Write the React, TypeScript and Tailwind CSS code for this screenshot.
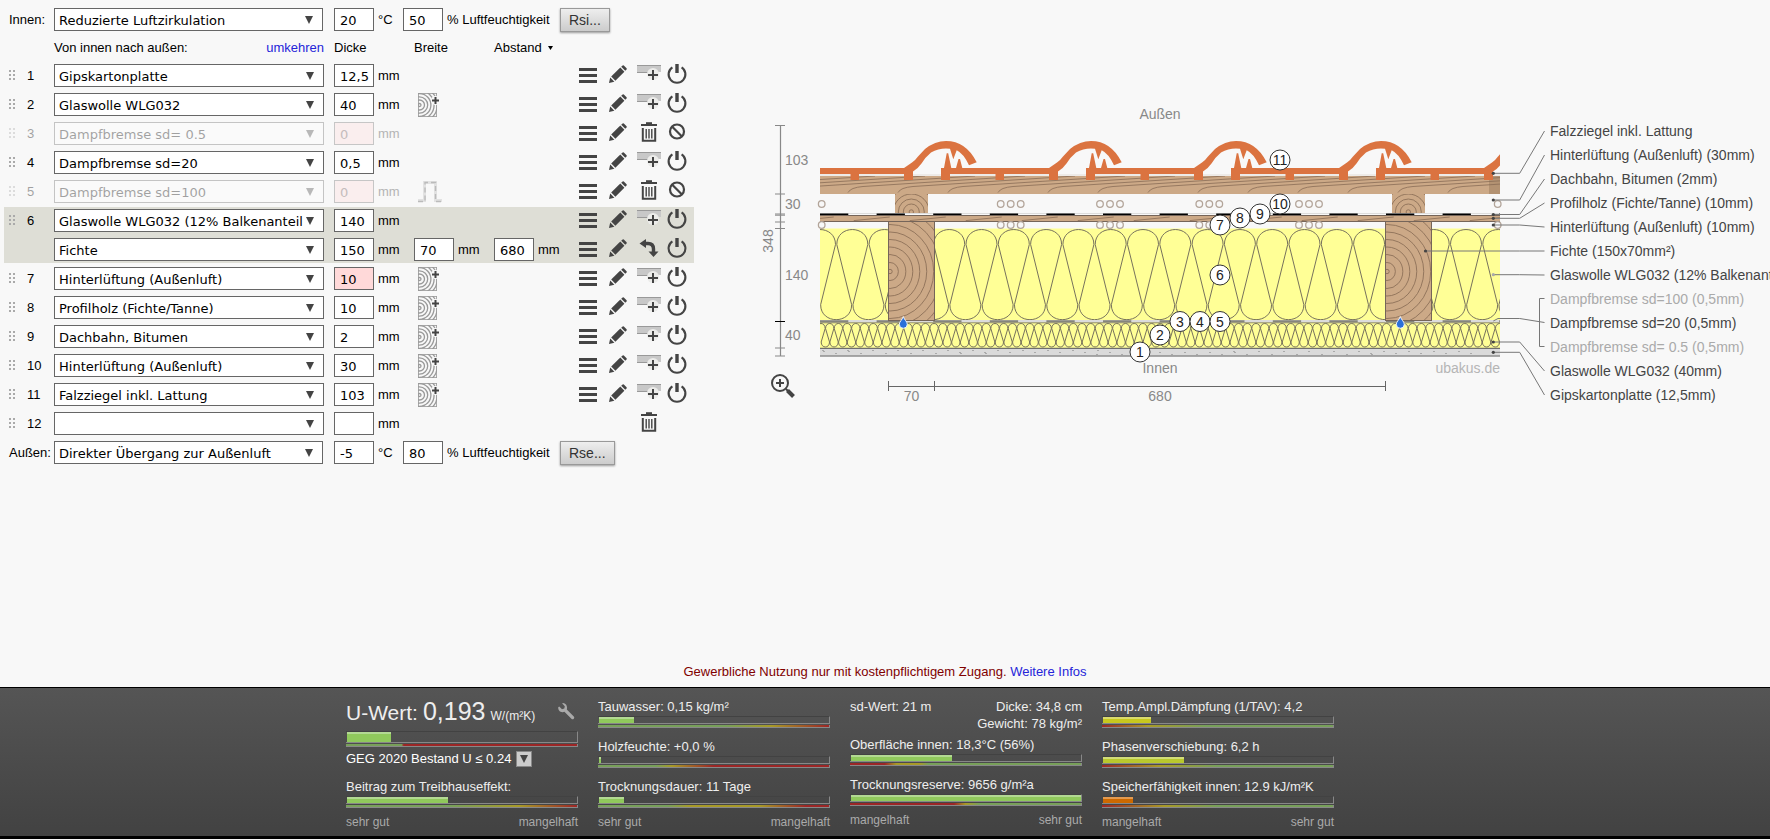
import React from "react";
import clsx from "clsx";

type Layer = {
    nr?: string;
    name: string;
    thickness: string;
    width?: string;
    spacing?: string;
    off?: boolean;
    warn?: boolean;
    extra?: "wood" | "fold";
    action?: "add" | "trash" | "swap";
    empty?: boolean;
};

const layers: Layer[] = [
    { nr: "1", name: "Gipskartonplatte", thickness: "12,5" },
    { nr: "2", name: "Glaswolle WLG032", thickness: "40", extra: "wood" },
    { nr: "3", name: "Dampfbremse sd= 0.5", thickness: "0", off: true, action: "trash" },
    { nr: "4", name: "Dampfbremse sd=20", thickness: "0,5" },
    { nr: "5", name: "Dampfbremse sd=100", thickness: "0", off: true, action: "trash", extra: "fold" },
];

const beamLayers: Layer[] = [
    { nr: "6", name: "Glaswolle WLG032 (12% Balkenanteil)", thickness: "140" },
    { name: "Fichte", thickness: "150", width: "70", spacing: "680", action: "swap" },
];

const outerLayers: Layer[] = [
    { nr: "7", name: "Hinterlüftung (Außenluft)", thickness: "10", warn: true, extra: "wood" },
    { nr: "8", name: "Profilholz (Fichte/Tanne)", thickness: "10", extra: "wood" },
    { nr: "9", name: "Dachbahn, Bitumen", thickness: "2", extra: "wood" },
    { nr: "10", name: "Hinterlüftung (Außenluft)", thickness: "30", extra: "wood" },
    { nr: "11", name: "Falzziegel inkl. Lattung", thickness: "103", extra: "wood" },
    { nr: "12", name: "", thickness: "", action: "trash", empty: true },
];

/* ---------- icons ---------- */

const MenuIcon = () => (
    <svg width="18" height="16" viewBox="0 0 18 16" fill="#444">
        <rect width="18" height="3" y="1" />
        <rect width="18" height="3" y="7" />
        <rect width="18" height="3" y="13" />
    </svg>
);

const PencilIcon = () => (
    <svg width="18" height="18" viewBox="0 0 18 18" fill="#444">
        <path d="M0 18 L1.2 12.6 L5.4 16.8 Z" />
        <path d="M2.2 11.4 L11.3 2.6 L15.4 6.7 L6.4 15.7 Z" />
        <path d="M12.2 1.8 L13.6 0.4 Q14.2 0 14.8 0.5 L17.6 3.2 Q18 3.8 17.5 4.4 L16.3 5.8 Z" />
    </svg>
);

const AddRowIcon = () => (
    <svg width="24" height="20" viewBox="0 0 24 20">
        <rect x="0" y="1" width="24" height="7" fill="#c8c8c8" />
        <rect x="0" y="1" width="24" height="1" fill="#999" />
        <rect x="0" y="8" width="11" height="1" fill="#999" />
        <circle cx="16" cy="10" r="6" fill="#ececea" />
        <path d="M16 6v10M11 11h10" stroke="#444" strokeWidth="2" />
    </svg>
);

const TrashIcon = () => (
    <svg width="16" height="20" viewBox="0 0 16 20" fill="none" stroke="#444">
        <path d="M5 1.2h6" strokeWidth="2" />
        <path d="M0 3h16" strokeWidth="2" />
        <path d="M1.8 6v12.8h12.4V6" strokeWidth="2" />
        <path d="M5.2 7v9.5M8 7v9.5M10.8 7v9.5" strokeWidth="1.4" />
    </svg>
);

const SwapIcon = () => (
    <svg width="20" height="20" viewBox="0 0 20 20">
        <path d="M5 5.5h4q5.5 0 5.5 5.5v3" fill="none" stroke="#444" strokeWidth="3.4" />
        <path d="M7 1v9L0.5 5.5zM9.5 13.5h10l-5 5.5z" fill="#444" />
    </svg>
);

const PowerIcon = () => (
    <svg width="20" height="22" viewBox="0 0 20 22" fill="none" stroke="#444">
        <path d="M5.4 4.3a8.4 8.4 0 1 0 9.2 0" strokeWidth="2.1" />
        <path d="M10 1v9" strokeWidth="3.4" />
    </svg>
);

const ForbiddenIcon = () => (
    <svg width="18" height="18" viewBox="0 0 18 18" fill="none" stroke="#444" strokeWidth="2.2">
        <circle cx="9" cy="8.5" r="7" />
        <path d="M4 3.5l10 10" />
    </svg>
);

const WoodIcon = () => (
    <svg width="22" height="24" viewBox="0 0 22 24" fill="none" stroke="#999">
        <svg width="19" height="24">
            <rect x="0.5" y="0.5" width="18" height="23" stroke="#aaa" />
            {[1.5, 5, 8.2, 11.4, 14.6, 17.8, 21].map((r) => (
                <circle key={r} cx="1.5" cy="12" r={r} strokeWidth="1.3" />
            ))}
        </svg>
        <circle cx="17.5" cy="7.5" r="4.5" fill="#f8f8f8" stroke="none" />
        <path d="M17.5 4v7M14 7.5h7" stroke="#444" strokeWidth="2" />
    </svg>
);

const FoldIcon = () => (
    <svg width="24" height="22" viewBox="0 0 24 22" fill="none">
        <path d="M0 19.5h6.5V1.5h11v18H24" stroke="#e2e2e2" strokeWidth="3" />
        <path d="M0 20.5h7V1.5h10.5v19H24" stroke="#bbb" strokeWidth="1.4" strokeDasharray="5 3" />
    </svg>
);

const WrenchIcon = () => (
    <svg width="17" height="17" viewBox="0 0 17 17">
        <path
            d="M4.2 0.6 L6.8 3.2 L6.3 5.6 L4 6.2 L1.2 3.6 L0.2 4.2 Q0 8 3.4 9 Q5 9.4 6.4 8.8 L13.4 15.8 Q14.6 16.8 15.8 15.8 Q16.8 14.4 15.8 13.4 L8.8 6.4 Q9.4 5 8.8 3.2 Q7.8 0.2 4.8 0 Z"
            fill="#aaa"
        />
    </svg>
);

const Arrow = () => (
    <svg width="8" height="8" viewBox="0 0 8 8" className="pointer-events-none absolute right-[10px] top-[8px]">
        <path d="M0 0h8L4 8z" fill="#444" />
    </svg>
);

/* ---------- form ---------- */

const Choice = ({ name, label, small, disabled }: { name: string; label: string; small?: boolean; disabled?: boolean }) => (
    <div className={clsx("relative h-[23px]", small ? "w-[269px]" : "w-[270px]", disabled && "opacity-35")}>
        <select
            aria-label={label}
            defaultValue={name}
            disabled={disabled}
            className="block h-full w-full appearance-none truncate border border-[#666] bg-white pl-1 pr-5 pt-0.5 font-[DejaVu_Sans,sans-serif] text-[13px] text-black text-clip opacity-100"
        >
            <option>{name}</option>
        </select>
        <Arrow />
    </div>
);

const NumberBox = ({ value, label, warn, disabled }: { value: string; label: string; warn?: boolean; disabled?: boolean }) => (
    <input
        aria-label={label}
        defaultValue={value}
        disabled={disabled}
        className={clsx(
            "block h-[23px] w-10 shrink-0 border pl-[5px] pt-0.5 font-[DejaVu_Sans,sans-serif] text-[13px]",
            disabled ? "border-[#c6c6c6] bg-[#faeeee] text-[#c4bcbc]" : "border-[#666] text-black",
            !disabled && (warn ? "bg-[#ffd9d9]" : "bg-white")
        )}
    />
);

const Grip = () => (
    <svg width="6" height="11" viewBox="0 0 6 11" fill="#aaa">
        {[0, 4, 8].map((y) => (
            <React.Fragment key={y}>
                <rect x="0" y={y} width="2" height="2" />
                <rect x="4" y={y} width="2" height="2" />
            </React.Fragment>
        ))}
    </svg>
);

const LayerRow = ({ layer }: { layer: Layer }) => {
    const { nr, name, thickness, width, spacing, off, warn, extra, action = "add", empty } = layer;
    const id = nr ? `Schicht ${nr}` : name;

    return (
        <div className="flex h-[27px] items-center">
            <div className={clsx("flex w-[50px] items-center gap-3 pl-[5px]", off && "opacity-35")}>
                {nr && <Grip />}
                <span>{nr}</span>
            </div>
            <Choice name={name} label={id} disabled={off} />
            <div className="ml-[10px] flex w-20 items-center gap-1">
                <NumberBox value={thickness} label={`${id} Dicke`} warn={warn} disabled={off} />
                <span className={off ? "text-[#b4b4b4]" : ""}>mm</span>
            </div>
            <div className="flex w-20 items-center gap-1">
                {width && <NumberBox value={width} label={`${id} Breite`} />}
                {width && "mm"}
                {extra && (
                    <button type="button" aria-label={`${id} Balken`} className="ml-1">
                        {extra === "wood" ? <WoodIcon /> : <FoldIcon />}
                    </button>
                )}
            </div>
            <div className="flex w-[79px] items-center gap-1">
                {spacing && <NumberBox value={spacing} label={`${id} Abstand`} />}
                {spacing && "mm"}
            </div>
            {!empty && (
                <>
                    <button type="button" aria-label={`${id} Menü`} className="flex w-[30px] justify-center pb-0.5">
                        <MenuIcon />
                    </button>
                    <button type="button" aria-label={`${id} bearbeiten`} className="flex w-[30px] justify-center pb-1">
                        <PencilIcon />
                    </button>
                </>
            )}
            <button
                type="button"
                aria-label={`${id} ${action === "trash" ? "löschen" : "einfügen"}`}
                className={clsx("flex w-[32px] justify-center pb-1", empty && "ml-[60px]")}
            >
                {action === "add" && <AddRowIcon />}
                {action === "trash" && <TrashIcon />}
                {action === "swap" && <SwapIcon />}
            </button>
            {!empty && (
                <button type="button" aria-label={`${id} ein/aus`} className="flex w-6 justify-center pb-1">
                    {off ? <ForbiddenIcon /> : <PowerIcon />}
                </button>
            )}
        </div>
    );
};

const ClimateRow = ({ label, name, temp, humidity, button }: { label: string; name: string; temp: string; humidity: string; button: string }) => (
    <div className="flex h-[27px] items-center">
        <span className="w-[50px] pl-[5px]">{label}</span>
        <Choice name={name} label={label} small />
        <div className="ml-[11px] flex w-[69px] items-center gap-1">
            <NumberBox value={temp} label={`${label} Temperatur`} />
            °C
        </div>
        <div className="flex w-[157px] items-center gap-1 whitespace-nowrap">
            <NumberBox value={humidity} label={`${label} Luftfeuchtigkeit`} />
            % Luftfeuchtigkeit
        </div>
        <button
            type="button"
            className="h-6 border border-[#999] bg-gradient-to-b from-[#eee] to-[#ccc] px-2 text-sm leading-5 text-[#333] shadow-[0_1px_2px_#999]"
        >
            {button}
        </button>
    </div>
);

/* ---------- cross section ---------- */

// Loops of mineral wool between y1 and y2
const wool = (period: number, start: number, y1: number, y2: number, ry: number) => {
    const half = period / 2;
    const r = half - period * 0.02;
    let d = "";
    for (let x = start; x < 770; x += period) {
        d += `M${x - r} ${y1 + ry}C${x - r} ${y1 - ry * 0.33} ${x + r} ${y1 - ry * 0.33} ${x + r} ${y1 + ry}`;
        d += `L${x + half - r} ${y2 - ry}C${x + half - r} ${y2 + ry * 0.33} ${x + half + r} ${y2 + ry * 0.33} ${x + half + r} ${y2 - ry}`;
        d += `L${x + period - r} ${y1 + ry}`;
    }
    return d;
};

const tiles = [-145, 0, 145, 290, 435, 580];
const beams = [138, 635];
const airGaps = [71.7, 250.7, 260.7, 270.7, 350, 360, 370, 449.3, 459.3, 469.3, 549, 559, 569, 747.7];
const drops = [153.3, 650.3];
const scaleTicks = [25.5, 94, 114, 115.2, 122, 128.5, 248, 256];
const scaleLabels: [string, number][] = [["103", 65], ["30", 109], ["140", 180], ["40", 240]];
const grain = Array.from({ length: 16 }, (_, i) => -52 + i * 50);
const specks = Array.from({ length: 60 }, (_, i) => [72 + ((i * 137) % 660), 250 + ((i * 7) % 5)]);

const badges: [string, number, number][] = [
    ["1", 390, 252], ["2", 410, 235], ["3", 430, 221.5], ["4", 450, 221.5], ["5", 470, 221.5], ["6", 470, 175],
    ["7", 470, 125], ["8", 490, 118], ["9", 510, 114], ["10", 530, 104], ["11", 530, 60],
];

const captions: [string, boolean?][] = [
    ["Falzziegel inkl. Lattung"],
    ["Hinterlüftung (Außenluft) (30mm)"],
    ["Dachbahn, Bitumen (2mm)"],
    ["Profilholz (Fichte/Tanne) (10mm)"],
    ["Hinterlüftung (Außenluft) (10mm)"],
    ["Fichte (150x70mm²)"],
    ["Glaswolle WLG032 (12% Balkenanteil)"],
    ["Dampfbremse sd=100 (0,5mm)", true],
    ["Dampfbremse sd=20 (0,5mm)"],
    ["Dampfbremse sd= 0.5 (0,5mm)", true],
    ["Glaswolle WLG032 (40mm)"],
    ["Gipskartonplatte (12,5mm)"],
];

// x and y at the layer, y at the caption
const leaders: [number, number, number][] = [
    [743.3, 73.3, 31], [743.3, 100, 55], [743.3, 114.5, 79], [743.3, 118.3, 103], [743.3, 125, 127],
    [675.5, 151, 151], [743.3, 174.7, 175], [743.3, 242, 271], [743.3, 252.3, 295],
];

const CrossSection = () => (
    <svg width="1020" height="310" viewBox="0 0 1020 310" className="block font-[Liberation_Sans,Arial,sans-serif] text-sm" fill="none">
        <defs>
            <clipPath id="section"><rect x="70" y="0" width="680" height="260" /></clipPath>
            <clipPath id="batten"><rect x="70" y="76" width="680" height="18" /></clipPath>
            <clipPath id="board"><rect x="70" y="115" width="680" height="7" /></clipPath>
        </defs>

        {/* vertical scale */}
        <g stroke="#888">
            <path d="M30.5 25v231" strokeWidth="1.2" />
            {scaleTicks.map((y) => <path key={y} d={`M25 ${y}h10`} />)}
            <path d="M25 221.5h10" stroke="#000" />
        </g>
        <g fill="#888">
            {scaleLabels.map(([t, y]) => <text key={t} x="35" y={y}>{t}</text>)}
            <text transform="translate(23 141) rotate(-90)" textAnchor="middle">348</text>
            <text x="410" y="19" textAnchor="middle">Außen</text>
            <text x="410" y="273" textAnchor="middle">Innen</text>
            <text x="750" y="273" textAnchor="end" fill="#b5b5b5">ubakus.de</text>
        </g>

        <g clipPath="url(#section)">
            {/* roof batten */}
            <rect x="70" y="74" width="680" height="2" fill="#eeebe8" />
            <rect x="70" y="76" width="680" height="18" fill="#cca987" />
            <rect x="739" y="76" width="11" height="18" fill="#b39272" />
            <g clipPath="url(#batten)" stroke="#8a6d56" strokeOpacity="0.8">
                {grain.map((x) => (
                    <path key={x} d={`M${x} 92.5q2 -3 5 -4q4 -1.5 10 -2l100 -6.5l62 -4`} />
                ))}
            </g>

            {/* counter battens */}
            {beams.map((x) => (
                <svg key={x} x={x + 7} y="94" width="33" height="20">
                    <rect width="33" height="20" fill="#cca987" />
                    <g stroke="#8a6d56" strokeOpacity="0.85">
                        {[2.2, 8, 13, 18, 24].map((r) => <circle key={r} cx="16.3" cy="18" r={r} />)}
                    </g>
                </svg>
            ))}

            {/* boards and bitumen sheet */}
            <rect x="70" y="115" width="680" height="7" fill="#cca987" />
            <g clipPath="url(#board)" stroke="#8a6d56" strokeOpacity="0.8">
                {grain.map((x) => <path key={x} d={`M${x * 1.12 + 50} 120.6l36 -3.6`} />)}
            </g>
            <path d="M70 113.5h680" stroke="#ddd" />
            <path d="M70 115.5h680M70 121.5h680" stroke="#75655a" />
            <path d="M70 114.2h680" stroke="#000" strokeWidth="1.6" strokeDasharray="28.3 28.3" />

            {/* insulation */}
            <rect x="70" y="128.5" width="680" height="92" fill="#ffff96" />
            <path d={wool(32.3, 70, 129.5, 219.7, 15)} stroke="#77725c" />
            <rect x="70" y="222" width="680" height="26" fill="#ffff96" />
            <path d={wool(8.7, 71, 223.5, 247, 5)} stroke="#77725c" />

            {/* vapour barrier */}
            <path d="M70 221.3h680" stroke="#dcdcdc" strokeWidth="2.4" />
            <path d="M70 221.3h680" stroke="#85857c" strokeWidth="2" strokeDasharray="28.3 28.3" />
            <path d="M70 222.8h680" stroke="#77725c" strokeWidth="0.8" />

            {/* beams */}
            {beams.map((x) => (
                <svg key={x} x={x} y="122" width="47" height="99">
                    <rect x="0.5" y="0" width="46" height="98.5" fill="#cca987" />
                    <g stroke="#8a6d56" strokeOpacity="0.85">
                        <circle cx="2" cy="49.5" r="2.2" />
                        {[9, 17, 24.5, 32, 39.5, 47, 55, 63].map((r) => (
                            <ellipse key={r} cx="2" cy="49.5" rx={r * 0.93} ry={r} />
                        ))}
                    </g>
                    <rect x="0.5" y="-1" width="46" height="99.5" stroke="#75655a" />
                </svg>
            ))}

            {/* plasterboard */}
            <rect x="70" y="248" width="680" height="8" fill="#dadada" />
            {specks.map(([x, y], i) => <rect key={i} x={x} y={y} width="2" height="1" fill="#aaa" />)}
            <path d="M70 248.3h680" stroke="#6f6f6c" strokeWidth="1.2" />
            <path d="M70 256h680" stroke="#8e8e8e" strokeWidth="1.6" />

            {/* roof tiles */}
            {tiles.map((x) => (
                <g key={x} transform={`translate(${x} 0)`} fill="#db7340">
                    <path d="M191 68H194L196.7 53.3H198.2L201.3 68H206L208.5 59H210L212.3 68H299L307 62.5Q310.5 60 313 56.5L320 49Q330 41 341 41Q361 41 371.7 62.3L364 65.3Q358.5 53.5 351.7 50.3L348.3 59.3L345 48.8Q335 47.5 326 52.5Q320.5 57 316.5 63.5Q313 68.5 308 71.5V80H299V74H254V80H245.5V74H200V80H191Z" />
                </g>
            ))}
        </g>

        <g stroke="#b3a59a" strokeWidth="1.3">
            {airGaps.map((x) => (
                <React.Fragment key={x}>
                    <circle cx={x} cy="104" r="3.3" />
                    <circle cx={x} cy="125" r="3.3" />
                </React.Fragment>
            ))}
        </g>

        {drops.map((x) => (
            <path key={x} d={`M${x} 216.5C${x + 1} 220 ${x + 4} 221.5 ${x + 4} 224.3A4 4 0 0 1 ${x - 4} 224.3C${x - 4} 221.5 ${x - 1} 220 ${x} 216.5Z`} fill="#2b70d9" stroke="#fff" strokeWidth="0.9" />
        ))}

        {/* leader lines */}
        <g stroke="#777">
            {leaders.map(([x, y, to]) => <path key={to} d={`M${x} ${y}H769.7L794.5 ${to}`} />)}
            <path d="M743.3 221L748 218.5H769.7L794.5 222.5M794.5 198.5H789.5V246.5H794.5" />
        </g>
        {leaders.map(([x, y]) => <circle key={y} cx={x} cy={y} r="1.6" fill={y === 174.7 ? "#aaa" : "#444"} />)}

        {captions.map(([t, off], i) => (
            <text key={t} x="800" y={36 + i * 24} fill={off ? "#aaa" : "#444"}>{t}</text>
        ))}

        {badges.map(([t, x, y]) => (
            <g key={t}>
                <circle cx={x} cy={y} r="10" fill="#fff" stroke="#333" />
                <text x={x} y={y + 5} textAnchor="middle" fill="#222">{t}</text>
            </g>
        ))}

        {/* horizontal scale */}
        <path d="M138.5 286.5h497M138.5 281v10M184.5 281v10M635.5 281v10" stroke="#666" />
        <text x="161.5" y="301" textAnchor="middle" fill="#888">70</text>
        <text x="410" y="301" textAnchor="middle" fill="#888">680</text>

        {/* magnifier */}
        <g stroke="#444">
            <circle cx="30" cy="283" r="8" strokeWidth="2" />
            <path d="M30 279v8M26 283h8" strokeWidth="2" />
            <path d="M36 289l2.5 2.5" strokeWidth="2" />
            <path d="M37.5 290.5l6 6" strokeWidth="4" />
        </g>
    </svg>
);

/* ---------- results ---------- */

type MeterProps = { value: number; fill: string; scale: string; tall?: boolean };

const Meter = ({ value, fill, scale, tall }: MeterProps) => (
    <div className="w-full">
        <div className={clsx("border-b border-r border-t border-b-[#888] border-r-[#888] border-t-[#424242] pl-px", tall ? "h-3" : "h-2")}>
            <div className={clsx("h-full border-t-2", fill)} style={{ width: `${value}%` }} />
        </div>
        <div className={clsx("mt-px h-[3px] border-b border-r border-[#888]", scale)} />
    </div>
);

const green = "bg-[#90c95c] border-[#b3d993]";

const Result = ({ text, ...meter }: { text: string } & MeterProps) => (
    <div className="h-10">
        <p className="mb-px h-4 leading-4">{text}</p>
        <Meter {...meter} />
    </div>
);

const Ends = ({ left, right }: { left: string; right: string }) => (
    <div className="-mt-[5px] flex justify-between text-xs leading-4 text-[#aaa]">
        <span>{left}</span>
        <span>{right}</span>
    </div>
);

const Results = () => (
    <footer className="border-b-[3px] border-t border-black bg-gradient-to-b from-[#555] to-[#424242] text-[13px] text-[#eee]">
        <div className="mx-auto grid h-[148px] w-full max-w-[1078px] grid-cols-[repeat(4,232px)] gap-5 pt-[11px]">
            <div>
                <div className="flex h-8 items-start justify-between">
                    <p className="flex items-baseline gap-[5px] text-[21px] leading-6">
                        U-Wert: <span className="text-[25px]">0,193</span>
                        <span className="text-xs">W/(m²K)</span>
                    </p>
                    <button type="button" aria-label="Einstellungen" className="mr-[3px] mt-1">
                        <WrenchIcon />
                    </button>
                </div>
                <Meter value={19} fill={green} tall scale="bg-[linear-gradient(to_right,#78a05a_24%,#9c2626_25%)]" />
                <div className="flex h-8 items-start gap-[5px] pt-1 text-white">
                    <span className="leading-4">GEG 2020 Bestand U ≤ 0.24</span>
                    <button type="button" aria-label="Anforderung wählen" className="flex h-4 w-4 items-center justify-center border border-[#888] bg-[#ccc]">
                        <svg width="8" height="8" viewBox="0 0 8 8"><path d="M0 0h8L4 8z" fill="#444" /></svg>
                    </button>
                </div>
                <Result text="Beitrag zum Treibhauseffekt:" value={44} fill={green} scale="bg-[linear-gradient(to_right,#78a05a_45%,#a89a28_75%,#9c2626)]" />
                <Ends left="sehr gut" right="mangelhaft" />
            </div>
            <div>
                <Result text="Tauwasser: 0,15 kg/m²" value={15} fill={green} scale="bg-[linear-gradient(to_right,#78a05a_55%,#a89a28_75%,#9c2626)]" />
                <Result text="Holzfeuchte: +0,0 %" value={1} fill={green} scale="bg-[linear-gradient(to_right,#78a05a_25%,#a89a28_32%,#9c2626_50%)]" />
                <Result text="Trocknungsdauer: 11 Tage" value={11} fill={green} scale="bg-[linear-gradient(to_right,#78a05a_30%,#a89a28_40%,#a89a28_70%,#9c2626_90%)]" />
                <Ends left="sehr gut" right="mangelhaft" />
            </div>
            <div>
                <div className="flex h-[38px] justify-between leading-[18px]">
                    <span className="leading-4">sd-Wert: 21 m</span>
                    <p className="text-right"><span className="block leading-4">Dicke: 34,8 cm</span>Gewicht: 78 kg/m²</p>
                </div>
                <Result text="Oberfläche innen: 18,3°C (56%)" value={44} fill={green} scale="bg-[linear-gradient(to_right,#9c2626_15%,#a89a28_20%,#a89a28_30%,#78a05a_34%)]" />
                <Result text="Trocknungsreserve: 9656 g/m²a" value={100} fill={green} scale="bg-[linear-gradient(to_right,#9c2626_45%,#a89a28_50%,#78a05a_56%)]" />
                <Ends left="mangelhaft" right="sehr gut" />
            </div>
            <div>
                <Result text="Temp.Ampl.Dämpfung (1/TAV): 4,2" value={21} fill="bg-[#c8c81e] border-[#dada6c]" scale="bg-[linear-gradient(to_right,#9c2626,#a89a28_20%,#78a05a_45%)]" />
                <Result text="Phasenverschiebung: 6,2 h" value={35} fill="bg-[#b9c82d] border-[#d2dc78]" scale="bg-[linear-gradient(to_right,#9c2626,#a89a28_25%,#78a05a_50%)]" />
                <Result text="Speicherfähigkeit innen: 12.9 kJ/m²K" value={13} fill="bg-[#cd6900] border-[#e39a50]" scale="bg-[linear-gradient(to_right,#9c2626,#a89a28_27%,#78a05a_50%)]" />
                <Ends left="mangelhaft" right="sehr gut" />
            </div>
        </div>
    </footer>
);

const App = () => (
    <div className="flex min-h-screen flex-col overflow-x-hidden bg-[#f8f8f8] pb-px font-[Liberation_Sans,Arial,sans-serif] text-[13px] text-black">
        <main className="flex flex-1 items-start pl-1 pt-[6px]">
            <form className="w-[690px] shrink-0">
                <ClimateRow label="Innen:" name="Reduzierte Luftzirkulation" temp="20" humidity="50" button="Rsi..." />
                <div className="flex h-[29px] items-center pl-[50px]">
                    <div className="flex w-[270px] justify-between">
                        <span>Von innen nach außen:</span>
                        <a href="#umkehren" className="text-[#2525d8]">umkehren</a>
                    </div>
                    <span className="ml-[10px] w-20">Dicke</span>
                    <span className="w-20">Breite</span>
                    <button type="button" className="flex items-center gap-1.5">
                        Abstand
                        <svg width="5" height="4" viewBox="0 0 5 4"><path d="M0 0h5L2.5 4z" fill="#000" /></svg>
                    </button>
                </div>
                <div className="flex flex-col gap-[2px]">
                    {layers.map((l) => <LayerRow key={l.nr} layer={l} />)}
                    <div className="flex flex-col gap-[2px] bg-[#deded6]">
                        {beamLayers.map((l) => <LayerRow key={l.name} layer={l} />)}
                    </div>
                    {outerLayers.map((l) => <LayerRow key={l.nr} layer={l} />)}
                    <ClimateRow label="Außen:" name="Direkter Übergang zur Außenluft" temp="-5" humidity="80" button="Rse..." />
                </div>
            </form>
            <section className="ml-14 mt-[94px] min-w-0 flex-1 overflow-hidden">
                <CrossSection />
            </section>
        </main>
        <p className="mb-[7px] text-center leading-4 text-[#800000]">
            Gewerbliche Nutzung nur mit kostenpflichtigem Zugang.{" "}
            <a href="#infos" className="text-[#2525d8]">Weitere Infos</a>
        </p>
        <Results />
    </div>
);

export default App;
